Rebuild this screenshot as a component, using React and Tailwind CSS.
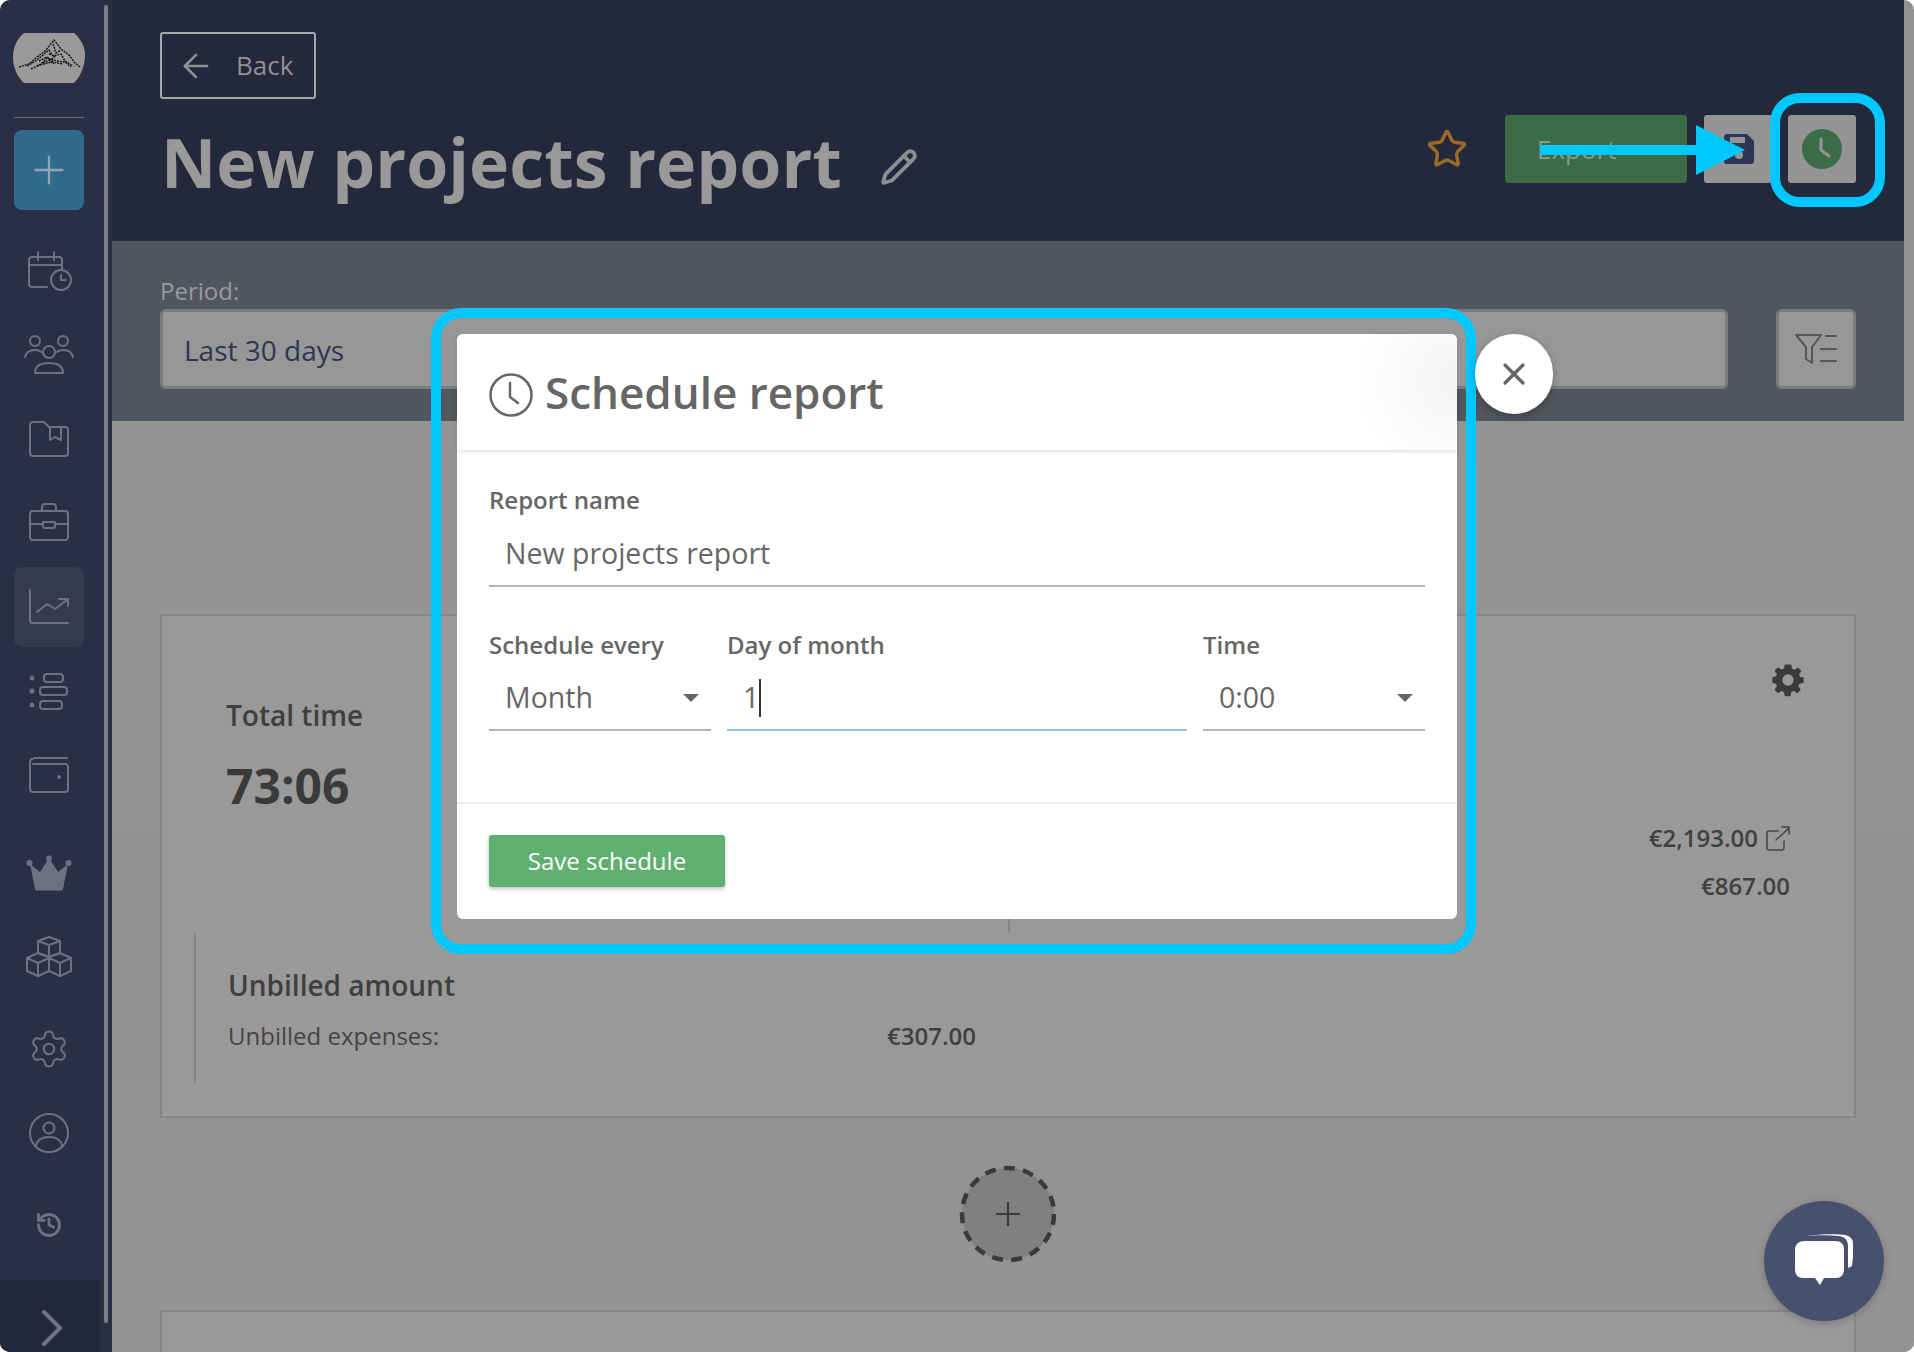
import React from "react";
import { Settings, Pencil, Star, ArrowLeft, X, Plus, History } from "lucide-react";

const s = { fill: "none", stroke: "#6e7280", strokeWidth: 2, strokeLinecap: "round", strokeLinejoin: "round" };

const CalIcon = () => (
  <svg width="46" height="41" viewBox="0 0 46 41" {...s}>
    <path d="M21 37H6a3 3 0 0 1-3-3V10a3 3 0 0 1 3-3h27a3 3 0 0 1 3 3v10" />
    <path d="M3 15h33M12 2v8M28 2v8" />
    <circle cx="35" cy="30" r="10" />
    <path d="M35 25v5h5" />
  </svg>
);
const PeopleIcon = () => (
  <svg width="50" height="40" viewBox="0 0 50 40" {...s}>
    <circle cx="11" cy="6" r="5" /><circle cx="39" cy="6" r="5" /><circle cx="25" cy="17" r="6" />
    <path d="M11 38c0-7 6-10 14-10s14 3 14 10z" />
    <path d="M1 22c1-5 5-7 10-7 3 0 5 1 6 2M49 22c-1-5-5-7-10-7-3 0-5 1-6 2" />
  </svg>
);
const FolderIcon = () => (
  <svg width="40" height="36" viewBox="0 0 40 36" {...s}>
    <path d="M4 1h11l5 5h16a3 3 0 0 1 3 3v23a3 3 0 0 1-3 3H4a3 3 0 0 1-3-3V4a3 3 0 0 1 3-3z" />
    <path d="M21 6v13l5-3 6 3V6" />
  </svg>
);
const CaseIcon = () => (
  <svg width="40" height="38" viewBox="0 0 40 38" {...s}>
    <rect x="1" y="8" width="38" height="29" rx="3" />
    <path d="M13 8V4a3 3 0 0 1 3-3h8a3 3 0 0 1 3 3v4M1 21h13M26 21h13" />
    <path d="M14 19h12v4a2 2 0 0 1-2 2h-8a2 2 0 0 1-2-2z" />
  </svg>
);
const ChartIcon = () => (
  <svg width="40" height="36" viewBox="0 0 40 36" {...s}>
    <path d="M1 1v30a3 3 0 0 0 3 3h35" />
    <path d="M8 23l10-8 8 5 12-9M30 10h9v7" />
  </svg>
);
const ListIcon = () => (
  <svg width="40" height="38" viewBox="0 0 40 38" {...s}>
    <rect x="15" y="1" width="19" height="8" rx="3" />
    <rect x="11" y="14" width="27" height="8" rx="3" />
    <rect x="11" y="28" width="22" height="8" rx="3" />
    <circle cx="3" cy="5" r="1.500" fill="#6e7280" /><circle cx="3" cy="18" r="1.500" fill="#6e7280" /><circle cx="3" cy="32" r="1.500" fill="#6e7280" />
  </svg>
);
const WalletIcon = () => (
  <svg width="40" height="36" viewBox="0 0 40 36" {...s}>
    <path d="M5 1h33M4 7h32a3 3 0 0 1 3 3v22a3 3 0 0 1-3 3H4a3 3 0 0 1-3-3V5a3 3 0 0 1 3-3" />
    <circle cx="30" cy="20" r="1" fill="#6e7280" />
  </svg>
);
const CrownIcon = () => (
  <svg width="46" height="36" viewBox="0 0 46 36" fill="#6e7280">
    <circle cx="3.500" cy="8" r="3" /><circle cx="23" cy="3.500" r="3" /><circle cx="42.500" cy="8" r="3" />
    <path d="M4 9l10 8 9-14 9 14 10-8-5 25a2 2 0 0 1-2 1.500H11a2 2 0 0 1-2-1.500z" />
  </svg>
);
const CubesIcon = () => (
  <svg width="46" height="42" viewBox="0 0 46 42" {...s}>
    <path d="M23 1l11 4v12l-11 4-11-4V5zM12 5l11 4 11-4M23 9v12" />
    <path d="M12 17l11 4v14l-11 5-11-5V22zM1 22l11 5 11-5M12 27v13" />
    <path d="M34 17l11 5v13l-11 5-11-5V21zM23 22l11 5 11-5M34 27v13" />
  </svg>
);
const UserIcon = () => (
  <svg width="40" height="40" viewBox="0 0 40 40" {...s}>
    <circle cx="20" cy="20" r="19" /><circle cx="20" cy="15" r="5.500" />
    <path d="M7 33c1-6 6-9 13-9s12 3 13 9" />
  </svg>
);

const Side = ({ cls, tile, children }) => (
  <div className={cls}>
    <div className={tile ? "flex h-[80px] w-[70px] items-center justify-center rounded-[8px] bg-[#353a4e]" : "flex h-[80px] w-[70px] items-center justify-center"}>
      {children}
    </div>
  </div>
);

const Logo = () => (
  <svg width="72" height="50" viewBox="0 0 72 50">
    <path d="M11 0h50c7 6 11 14 11 22s-3 20-11 28H11C4 44 0 34 0 24S4 6 11 0z" fill="#9a9a9a" />
    <g fill="none" stroke="#111" strokeWidth="1.400" strokeDasharray="2 1">
      <path d="M6 34l10-3 8-7 8-6 9-11 7 9 8 6 6 8 5 4" />
      <path d="M14 33l10-6 12-10 4 6 8-2 4 7 8 5" />
      <path d="M18 36l10-5 6-6 10 3 8 1 6 5" />
      <path d="M24 33l14-4 12 2M26 28l8-4 6 5M40 11l3 9 5-3M30 30l6-3 5 4M36 21l6 2-4 4" />
    </g>
  </svg>
);

const Chat = () => (
  <svg width="62" height="56" viewBox="0 0 62 56">
    <path d="M14 3c12-2 30-2 38-1 5 1 8 4 8 8v14l-1 9-4 2V14c0-7-3-10-9-11-10-1-22-1-32 0z" fill="#fff" />
    <path d="M12 8h30c6 0 9 3 9 8v20c0 6-3 9-8 9H31l-4 7-5-7H10c-5 0-8-3-8-9V17c0-6 4-9 10-9z" fill="#fff" />
  </svg>
);

const Label = ({ children }) => <div className="h-[32px] text-[24px] font-semibold leading-[32px] text-[#666]">{children}</div>;
const Caret = () => <span className="h-0 w-0 border-x-[8px] border-t-[8px] border-x-transparent border-t-[#666]" />;

export default function App() {
  return (
    <div className="flex h-[1352px] w-full overflow-hidden rounded-[10px] bg-[#929292] font-['Open_Sans',sans-serif]">
      {/* Sidebar */}
      <aside className="relative flex h-full w-[112px] shrink-0 flex-col bg-[#2a2f45]">
        <div className="absolute left-[104px] top-[5px] h-[1318px] w-[4px] rounded-full bg-[#7d7f84]" />
        <div className="flex w-[98px] flex-1 flex-col items-center">
          <div className="mt-[33px]"><Logo /></div>
          <div className="mt-[34px] h-[1px] w-[70px] bg-[#6a6e7c]" />
          <div className="mt-[12px] flex h-[80px] w-[70px] items-center justify-center rounded-[8px] bg-[#316a8c]">
            <Plus size={46} strokeWidth={1.2} color="#96a6b0" />
          </div>
          <Side cls="mt-[20px]"><CalIcon /></Side>
          <Side cls="mt-[5px]"><PeopleIcon /></Side>
          <Side cls="mt-[4px]"><FolderIcon /></Side>
          <Side cls="mt-[3px]"><CaseIcon /></Side>
          <Side cls="mt-[5px]" tile><ChartIcon /></Side>
          <Side cls="mt-[5px]"><ListIcon /></Side>
          <Side cls="mt-[3px]"><WalletIcon /></Side>
          <Side cls="mt-[18px]"><CrownIcon /></Side>
          <Side cls="mt-[4px]"><CubesIcon /></Side>
          <Side cls="mt-[12px]"><Settings size={42} strokeWidth={1.2} color="#6e7280" /></Side>
          <Side cls="mt-[4px]"><UserIcon /></Side>
          <Side cls="mt-[12px]"><History size={28} strokeWidth={2.4} color="#6e7280" /></Side>
        </div>
        <div className="flex h-[72px] w-[100px] items-start justify-center bg-[#23283a] pl-[3px] pt-[29px]">
          <svg width="22" height="38" viewBox="0 0 22 38" fill="none" stroke="#6e7280" strokeWidth="4" strokeLinecap="round" strokeLinejoin="round"><path d="M3 3l16 16L3 35" /></svg>
        </div>
      </aside>

      {/* Main */}
      <main className="flex min-w-0 flex-1 flex-col">
        <header className="mr-[10px] flex h-[241px] shrink-0 flex-col bg-[#23283a] pl-[48px] pr-[48px] pt-[32px]">
          <button className="flex h-[67px] w-[156px] items-center rounded-[3px] border-2 border-[#a6a7aa] pl-[15px] text-[26px] text-[#909296]">
            <ArrowLeft size={38} strokeWidth={1.6} color="#909296" />
            <span className="ml-[21px]">Back</span>
          </button>
          <div className="mt-[11px] flex h-[78px] items-center">
            <h1 className="ml-[1px] mt-[26px] shrink-0 text-[68px] font-bold leading-none text-[#999]">New projects report</h1>
            <Pencil size={38} strokeWidth={2.4} color="#8e8f92" className="ml-[38px] mt-[36px]" />
            <div className="ml-auto flex items-center">
              <Star size={42} strokeWidth={2} color="#9c6a26" />
              <div className="ml-[37px] flex h-[68px] w-[182px] items-center rounded-[3px] bg-[#3c6b47] pl-[32px] text-[26px] text-[#8a9a8e]">Export</div>
              <div className="ml-[17px] flex h-[68px] w-[68px] items-center justify-center rounded-[3px] bg-[#949494]">
                <svg className="ml-[1px]" width="30" height="30" viewBox="0 0 30 30"><path d="M3 0h20l7 7v20a3 3 0 0 1-3 3H3a3 3 0 0 1-3-3V3a3 3 0 0 1 3-3z" fill="#2e3552" /><circle cx="15" cy="21" r="4" fill="#949494" /><rect x="6" y="3" width="15" height="6" fill="#949494" /></svg>
              </div>
              <div className="ml-[16px] flex h-[68px] w-[68px] items-center justify-center rounded-[3px] bg-[#949494]">
                <svg width="40" height="40" viewBox="0 0 40 40"><circle cx="20" cy="20" r="20" fill="#3c6b47" /><path d="M19 10v11l8 6" fill="none" stroke="#949494" strokeWidth="3" strokeLinecap="round" strokeLinejoin="round" /></svg>
              </div>
            </div>
          </div>
        </header>

        <section className="mr-[10px] flex h-[180px] shrink-0 items-end bg-[#52565f] pb-[32px] pl-[48px] pr-[48px]">
          <div className="flex-1">
            <div className="mb-[2px] text-[24px] leading-[32px] text-[#9a9a9a]">Period:</div>
            <div className="flex h-[80px] items-center rounded-[6px] border-[3px] border-[#7a7c80] bg-[#979797] pl-[21px] pt-[1px] text-[28px] text-[#2f3650]">Last 30 days</div>
          </div>
          <div className="ml-[48px] flex h-[80px] w-[80px] items-center justify-center rounded-[6px] border-[3px] border-[#7a7c80] bg-[#979797]">
            <svg width="42" height="32" viewBox="0 0 42 32" fill="none" stroke="#555" strokeWidth="2" strokeLinecap="round" strokeLinejoin="round">
              <path d="M1 2h25L17 14v16l-6-4V14z" /><path d="M31 3h10M26 16h15M26 28h15" />
            </svg>
          </div>
        </section>

        <section className="flex flex-1 flex-col overflow-hidden bg-[linear-gradient(180deg,#949494,#919191_60%,#949494)] pl-[48px] pr-[58px] pt-[193px]">
          <div className="relative flex h-[504px] shrink-0 justify-between border-2 border-[#858585] bg-[#999]">
            <div className="absolute bottom-[184px] left-[846px] h-[20px] w-[2px] bg-[#858585]" />
            <div className="pl-[64px] pt-[79px]">
              <div className="text-[28px] font-semibold leading-[40px] text-[#3f3f3f]">Total time</div>
              <div className="mt-[21px] text-[48px] font-bold leading-[60px] text-[#3a3a3a]">73:06</div>
              <div className="ml-[-32px] mt-[117px] h-[150px] w-[782px] border-l-2 border-[#858585] pl-[32px] pt-[32px]">
                <div className="text-[28px] font-semibold leading-[40px] text-[#3f3f3f]">Unbilled amount</div>
                <div className="mt-[13px] flex items-center justify-between text-[24px] leading-[36px] text-[#454545]">
                  <span>Unbilled expenses:</span>
                  <span className="font-semibold text-[#3f3f3f]">€307.00</span>
                </div>
              </div>
            </div>
            <div className="flex flex-col items-end pr-[64px] pt-[47px] text-[24px] font-semibold leading-[36px] text-[#404040]">
              <svg className="mr-[-15px]" width="34" height="34" viewBox="0 0 24 24" fill="#3a3a3a"><path fillRule="evenodd" d="M14.300 1l.5 2.900 1.800.8 2.500-1.600 2.400 2.500-1.700 2.400.8 1.800L23 10v4l-2.900.6-.8 1.800 1.700 2.400-2.400 2.500-2.500-1.600-1.800.8-.5 2.900H9.700l-.5-2.900-1.800-.8-2.500 1.600L2.500 18.800l1.700-2.400-.8-1.800L1 14v-4l2.400-.4.800-1.800-1.700-2.400L4.900 3l2.500 1.600 1.800-.8.500-2.800zM12 8a4 4 0 1 0 0 8 4 4 0 0 0 0-8z" /></svg>
              <div className="mt-[123px] flex items-center">
                <span>€2,193.00</span>
                <svg className="ml-[8px]" width="24" height="25" viewBox="0 0 24 25" fill="none" stroke="#444" strokeWidth="1.500" strokeLinecap="round" strokeLinejoin="round"><path d="M12 5H3a2 2 0 0 0-2 2v15a2 2 0 0 0 2 2h13a2 2 0 0 0 2-2v-7M10 14L23 2M16 1h7v7" /></svg>
              </div>
              <div className="mt-[12px]">€867.00</div>
            </div>
          </div>
          <div className="flex h-[192px] shrink-0 items-center justify-center">
            <svg width="98" height="98" viewBox="0 0 98 98">
              <circle cx="49" cy="49" r="46" fill="#808080" stroke="#3a3a3a" strokeWidth="4.500" strokeDasharray="11 8.300" />
              <path d="M49 37v24M37 49h24" stroke="#3a3a3a" strokeWidth="2.200" fill="none" />
            </svg>
          </div>
          <div className="h-[60px] shrink-0 border-x-2 border-t-2 border-[#858585] bg-[#999]" />
        </section>
      </main>

      {/* Highlight ring around the clock button and pointing arrow */}
      <div className="absolute left-[1770px] top-[93px] h-[114px] w-[115px] rounded-[30px] border-[10px] border-[#00c8ff]" />
      <svg className="absolute left-[1540px] top-[125px]" width="206" height="50" viewBox="0 0 206 50">
        <path d="M0 20h156V0l49 25-49 25V30H0z" fill="#00c8ff" />
      </svg>

      {/* Modal */}
      <div className="absolute left-[431px] top-[308px] h-[646px] w-[1045px] rounded-[30px] border-[10px] border-[#00c8ff] pb-[25px] pl-[16px] pr-[9px] pt-[16px]">
        <div className="flex h-[585px] w-[1000px] flex-col rounded-[6px] bg-white text-[#666]">
          <div className="flex h-[116px] shrink-0 items-center rounded-t-[6px] bg-[radial-gradient(circle_at_100%_40%,#f3f3f3_0%,#ffffff_100px)] pl-[32px] shadow-[0_2px_4px_rgba(0,0,0,0.12)]">
            <svg className="mt-[6px]" width="44" height="44" viewBox="0 0 44 44" fill="none" stroke="#666" strokeWidth="2.500" strokeLinecap="round" strokeLinejoin="round"><circle cx="22" cy="22" r="20.500" /><path d="M21 10v14l8 6" /></svg>
            <h2 className="ml-[12px] text-[44px] font-semibold leading-none">Schedule report</h2>
          </div>
          <div className="flex-1 px-[32px] pt-[34px]">
            <Label>Report name</Label>
            <div className="mt-[9px] flex h-[62px] items-center border-b-2 border-[#b4b4b4] pb-[3px] pl-[16px] text-[28.500px]">New projects report</div>
            <div className="mt-[42px] grid grid-cols-[222px_460px_222px] gap-x-[16px]">
              <div>
                <Label>Schedule every</Label>
                <div className="mt-[8px] flex h-[62px] items-center justify-between border-b-2 border-[#b4b4b4] pb-[3px] pl-[16px] pr-[12px] text-[28.500px]"><span>Month</span><Caret /></div>
              </div>
              <div>
                <Label>Day of month</Label>
                <div className="mt-[8px] flex h-[62px] items-center border-b-2 border-[#90c4ea] pb-[3px] pl-[16px] text-[28.500px]"><span>1</span><span className="h-[38px] w-[2px] bg-[#333]" /></div>
              </div>
              <div>
                <Label>Time</Label>
                <div className="mt-[8px] flex h-[62px] items-center justify-between border-b-2 border-[#b4b4b4] pb-[3px] pl-[16px] pr-[12px] text-[28.500px]"><span>0:00</span><Caret /></div>
              </div>
            </div>
          </div>
          <div className="flex h-[117px] shrink-0 items-start border-t-2 border-[#ececec] pl-[32px] pt-[31px]">
            <button className="h-[52px] w-[236px] rounded-[3px] bg-[#5fb070] text-[24px] text-white shadow-[0_2px_4px_rgba(0,0,0,0.25)]">Save schedule</button>
          </div>
        </div>
      </div>
      <button className="absolute left-[1475px] top-[334px] flex h-[80px] w-[78px] items-center justify-center rounded-full bg-white shadow-[0_3px_8px_rgba(0,0,0,0.25)]">
        <X size={36} strokeWidth={2.2} color="#666" />
      </button>

      {/* Chat bubble */}
      <div className="absolute left-[1764px] top-[1201px] flex h-[120px] w-[120px] items-center justify-center rounded-full bg-[#47506e] shadow-[0_2px_8px_rgba(0,0,0,0.2)]">
        <Chat />
      </div>
    </div>
  );
}
